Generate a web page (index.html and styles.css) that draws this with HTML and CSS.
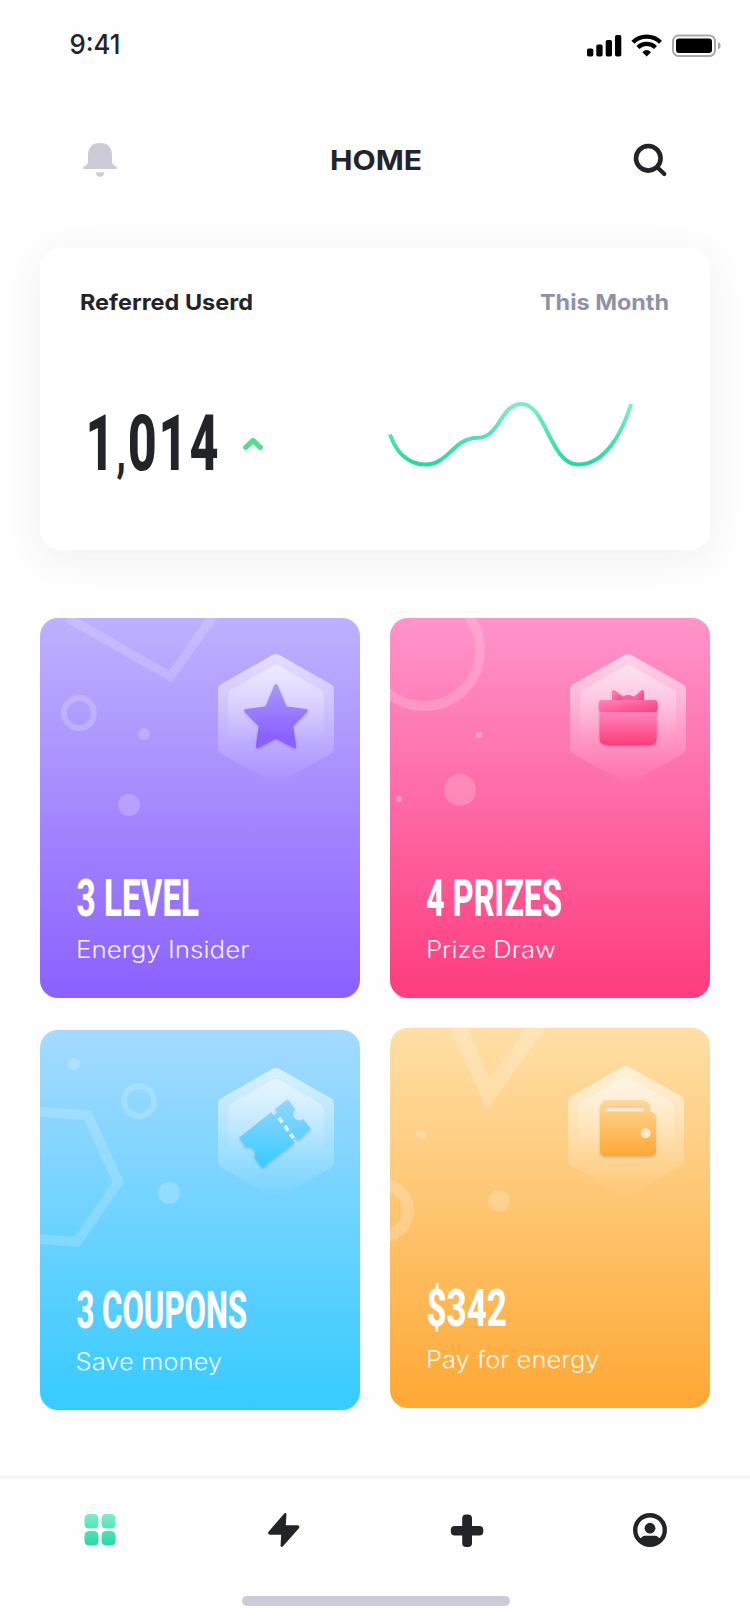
FILE: index.html
```html
<!DOCTYPE html>
<html lang="en">
<head>
<meta charset="utf-8">
<title>Home</title>
<link rel="stylesheet" href="styles.css">
</head>
<body>
<svg class="defs" width="0" height="0" aria-hidden="true">
  <defs>
    <linearGradient id="mint" x1="0" y1="0" x2="0" y2="1"><stop offset="0" stop-color="#7beecb"/><stop offset="1" stop-color="#27d8a3"/></linearGradient>
    <linearGradient id="glass" gradientUnits="userSpaceOnUse" x1="0" y1="-67" x2="0" y2="66"><stop offset="0" stop-color="#fff" stop-opacity=".64"/><stop offset="1" stop-color="#fff" stop-opacity="0"/></linearGradient>
    <linearGradient id="glass-in" gradientUnits="userSpaceOnUse" x1="0" y1="-55" x2="0" y2="22"><stop offset="0" stop-color="#fff" stop-opacity=".44"/><stop offset="1" stop-color="#fff" stop-opacity="0"/></linearGradient>
    <linearGradient id="violet" x1="0" y1="0" x2="0" y2="1"><stop offset="0" stop-color="#a797ff"/><stop offset=".85" stop-color="#8b60ff"/></linearGradient>
    <linearGradient id="rose" x1="0" y1="0" x2="0" y2="1"><stop offset="0" stop-color="#ff86bd"/><stop offset="1" stop-color="#fe3c7d"/></linearGradient>
    <linearGradient id="rose-lid" x1="0" y1="0" x2="1" y2="1"><stop offset="0" stop-color="#ff86bd"/><stop offset="1" stop-color="#fe3c7d"/></linearGradient>
    <linearGradient id="sky" x1="0" y1="0" x2="0" y2="1"><stop offset="0" stop-color="#93d6ff"/><stop offset="1" stop-color="#36cbff"/></linearGradient>
    <linearGradient id="amber" x1="0" y1="0" x2="0" y2="1"><stop offset="0" stop-color="#ffd898"/><stop offset="1" stop-color="#fea834"/></linearGradient>
    <filter id="lift" x="-20%" y="-20%" width="140%" height="150%"><feDropShadow dx="0" dy="1.5" stdDeviation="1" flood-color="#333" flood-opacity=".22"/></filter>
    <g id="badge">
      <path fill="url(#glass)" d="M-3.5-64.1Q0-66.100 3.500-64.100L54.500-34.900Q58-33 58-29V29Q58 33 54.500 34.900L3.500 64.100Q0 66.100-3.500 64.100L-54.500 34.900Q-58 33-58 29V-29Q-58-33-54.500-34.900Z"/>
      <path fill="url(#glass-in)" d="M-3.500-53.300Q0-55.300 3.500-53.300L44.500-29.600Q48-27.600 48-23.600V23.600Q48 27.600 44.500 29.600L3.500 53.300Q0 55.300-3.500 53.300L-44.500 29.600Q-48 27.600-48 23.600V-23.600Q-48-27.600-44.500-29.600Z"/>
    </g>
  </defs>
</svg>

<header class="status">
  <svg class="clock" width="60" height="34"><text class="label regular" x="-.5" y="22" font-size="27" textLength="51" lengthAdjust="spacingAndGlyphs">9:41</text></svg>
  <svg class="indicators" width="134" height="24" viewBox="587 34 134 24">
    <rect x="587" y="48.500" width="6.300" height="8" rx="1.800"/><rect x="596.300" y="44.500" width="6.300" height="12" rx="1.800"/><rect x="605.700" y="40" width="6.300" height="16.500" rx="1.800"/><rect x="615" y="35" width="6.300" height="21.500" rx="1.800"/>
    <g fill="none" stroke="#000" stroke-width="4.200"><path d="M632.900 42.300a19.800 19.800 0 0 1 27.600 0"/><path d="M637.900 47.500a12.600 12.600 0 0 1 17.600 0"/></g>
    <path d="M646.700 56.600l-4.300-4.400q4.300-4.200 8.600 0z"/>
    <rect x="673" y="35.500" width="42" height="20.500" rx="5.500" fill="none" stroke="#a8a8a8" stroke-width="2"/>
    <rect x="676" y="38.500" width="36" height="14.500" rx="3"/>
    <path fill="#a8a8a8" d="M718 42q2.700 1 2.700 3.700t-2.700 3.700z"/>
  </svg>
</header>

<nav class="topbar">
  <svg width="34" height="36" viewBox="83 142 34 36" fill="#cccbd7">
    <path d="M88 155.500Q88 143 100 143T112 155.500V161Q112 165 115.500 166.200Q117 166.800 117 168Q117 169 115.500 169H84.500Q83 169 83 168Q83 166.800 84.500 166.200Q88 165 88 161Z"/>
    <path d="M96 172.300h8.200q0 4.400-4.100 4.400t-4.100-4.400z"/>
  </svg>
  <svg width="110" height="40"><text class="label strong" x="10" y="30" font-size="27.300" textLength="92" lengthAdjust="spacingAndGlyphs">HOME</text></svg>
  <svg width="34" height="36" viewBox="633 142 34 36" fill="none" stroke="#232429"><circle cx="648.300" cy="158.300" r="12.300" stroke-width="4.600"/><path d="M657.500 167.500L664.300 174" stroke-width="4.200" stroke-linecap="round"/></svg>
</nav>

<section class="summary">
  <div class="summary-head">
    <svg width="180" height="30"><text class="label strong" x="0" y="22" font-size="22" textLength="173" lengthAdjust="spacingAndGlyphs">Referred Userd</text></svg>
    <svg width="136" height="30"><text class="label muted" x="6" y="22" font-size="22" textLength="129" lengthAdjust="spacingAndGlyphs">This Month</text></svg>
  </div>
  <div class="summary-body">
    <div class="figure">
      <svg width="146" height="90"><text class="display ink" x="1.500" y="66" font-size="78" letter-spacing="3" textLength="135" lengthAdjust="spacingAndGlyphs">1<tspan font-size="56">,</tspan>014</text></svg>
      <svg width="22" height="16" viewBox="242 436 22 16"><path d="M245.700 447.300L253 440.500L260.300 447.300" fill="none" stroke="#51de8d" stroke-width="5.200" stroke-linecap="round" stroke-linejoin="round"/></svg>
    </div>
    <svg width="248" height="68" viewBox="386 400 248 68"><path d="M390 434.300C396 452 408 464.600 425 464.600C449 464.600 453 437.700 478 437.700C500 437.700 500 404 521.700 404C546 404 550 464.600 578.300 464.600C604 464.600 621 436 631.200 404" fill="none" stroke="url(#mint)" stroke-width="4"/></svg>
  </div>
</section>

<main class="tiles">
  <article class="tile purple">
    <svg width="320" height="380">
      <g fill="#fff" fill-opacity=".2"><circle cx="104" cy="116" r="6"/><circle cx="89" cy="187" r="11"/></g>
      <g fill="none" stroke="#fff"><path d="M27-.5L130.500 58.500L181.500-13.600" stroke-width="9.200" stroke-opacity=".17"/><circle cx="39" cy="95" r="15" stroke-width="6" stroke-opacity=".2"/></g>
      <use href="#badge" x="236" y="101"/>
      <path filter="url(#lift)" fill="url(#violet)" stroke="url(#violet)" stroke-width="3.500" stroke-linejoin="round" d="M236 68L245.300 90L266 92.800L251.500 107.500L254.500 128.500L236 119L217.500 128.500L220.500 107.500L206 92.800L226.700 90Z"/>
      <text class="display" x="36.500" y="298" font-size="52" textLength="122.500" lengthAdjust="spacingAndGlyphs">3 LEVEL</text>
      <text class="label light" x="36" y="340" font-size="23.500" textLength="173.500" lengthAdjust="spacingAndGlyphs">Energy Insider</text>
    </svg>
  </article>
  <article class="tile pink">
    <svg width="320" height="380">
      <g fill="#fff"><circle cx="89" cy="117" r="3" fill-opacity=".35"/><circle cx="9" cy="181" r="3" fill-opacity=".35"/><circle cx="70" cy="172" r="16" fill-opacity=".2"/></g>
      <circle cx="34" cy="32" r="56" fill="none" stroke="#fff" stroke-opacity=".18" stroke-width="10"/>
      <use href="#badge" x="238" y="101"/>
      <g filter="url(#lift)">
        <path fill="url(#rose)" d="M209.500 93H266.700V120Q266.700 127 259.700 127H216.500Q209.500 127 209.500 120Z"/>
        <path fill="url(#rose-lid)" d="M222 83V74Q222 71.500 224.500 72.200L234 79.500V83Z"/>
        <path fill="url(#rose-lid)" d="M254 83V74Q254 71.500 251.500 72.200L243 79.500V83Z"/>
        <ellipse cx="238.300" cy="81" rx="6.500" ry="4" fill="#ff5f99"/>
        <rect x="208.700" y="82" width="59" height="12" rx="3.500" fill="url(#rose-lid)"/>
      </g>
      <text class="display" x="36" y="298" font-size="52" textLength="136" lengthAdjust="spacingAndGlyphs">4 PRIZES</text>
      <text class="label light" x="36" y="340" font-size="23.500" textLength="130" lengthAdjust="spacingAndGlyphs">Prize Draw</text>
    </svg>
  </article>
  <article class="tile blue">
    <svg width="320" height="380">
      <g fill="#fff" fill-opacity=".22"><circle cx="34" cy="34" r="6"/><circle cx="129" cy="163" r="11"/></g>
      <circle cx="99" cy="71" r="15" fill="none" stroke="#fff" stroke-opacity=".18" stroke-width="6"/>
      <path fill="#fff" fill-opacity=".17" d="M0 76.700L51 80.700L84 152.300L39.300 217.300L0 214V204L34.300 207L72.700 152.300L44.300 90L0 86.700Z"/>
      <use href="#badge" x="236" y="103"/>
      <g filter="url(#lift)"><path fill="url(#sky)" d="M199 107.700L231.300 82.300L233.600 85.500L237.300 82.600L235 79.300L247.700 69.300L255.300 79.200A6.300 6.300 0 0 0 263.300 89L271 99L258 110.500L255.600 107.200L252 109.500L254.700 112.700L222.300 138L214 126.700A6.300 6.300 0 0 0 206.300 117.500Z"/></g>
      <path d="M238 86.500L253.500 108" stroke="#dcf4ff" stroke-width="3.600" stroke-dasharray="6 4" stroke-dashoffset="-1.500"/>
      <text class="display" x="36.500" y="298" font-size="52" textLength="170.500" lengthAdjust="spacingAndGlyphs">3 COUPONS</text>
      <text class="label light" x="35.500" y="340" font-size="23.500" textLength="146.500" lengthAdjust="spacingAndGlyphs">Save money</text>
    </svg>
  </article>
  <article class="tile orange">
    <svg width="320" height="380">
      <g fill="#fff" fill-opacity=".2"><circle cx="31" cy="107" r="5"/><circle cx="109" cy="173" r="11"/><path d="M60 0L96.700 82.300L155.700 0H135.700L100 50.300L77.300 0Z"/></g>
      <circle cx="-8" cy="182.700" r="26" fill="none" stroke="#fff" stroke-opacity=".2" stroke-width="12"/>
      <use href="#badge" x="236" y="103"/>
      <g filter="url(#lift)"><path fill="url(#amber)" fill-rule="evenodd" d="M219 72H251Q260 72 260 81V83.700Q266 84.500 266 90V122Q266 128 260 128H216Q210 128 210 122V81Q210 72 219 72ZM217.500 78Q215.300 78 215.300 80.500V83.500H254.300V80.500Q254.300 78 252 78Z"/></g>
      <circle cx="255.700" cy="105.300" r="5" fill="#ffe9cb"/>
      <text class="display" x="36.500" y="298" font-size="52" textLength="80.500" lengthAdjust="spacingAndGlyphs">$342</text>
      <text class="label light" x="36" y="340" font-size="23.500" textLength="173.500" lengthAdjust="spacingAndGlyphs">Pay for energy</text>
    </svg>
  </article>
</main>

<footer class="tabs">
  <div class="tab-row">
    <svg width="36" height="36" viewBox="82 1512 36 36"><path fill="url(#mint)" d="M89.500 1514h4q5 0 5 5v4.500q0 5-5 5h-4q-5 0-5-5v-4.500q0-5 5-5zM106.500 1514h4q5 0 5 5v4.500q0 5-5 5h-4q-5 0-5-5v-4.500q0-5 5-5zM89.500 1531h4q5 0 5 5v4.500q0 5-5 5h-4q-5 0-5-5v-4.500q0-5 5-5zM106.500 1531h4q5 0 5 5v4.500q0 5-5 5h-4q-5 0-5-5v-4.500q0-5 5-5z"/></svg>
    <svg width="36" height="36" viewBox="265.500 1512 36 36" fill="#232429" stroke="#232429" stroke-width="2.500" stroke-linejoin="round"><path d="M285.700 1514.300L270 1532.500Q269.500 1533.500 270.800 1533.500H283L282.300 1545.700L298.500 1527.300Q298.800 1526.500 298 1526.500H285Z"/></svg>
    <svg width="36" height="36" viewBox="448.700 1512 36 36" fill="#232429"><rect x="461.900" y="1514.500" width="9.800" height="32.500" rx="4"/><rect x="450.500" y="1526" width="32.500" height="9.600" rx="4"/></svg>
    <svg width="36" height="36" viewBox="632 1512 36 36"><circle cx="650" cy="1530" r="14.800" fill="none" stroke="#232429" stroke-width="4.400"/><circle cx="650" cy="1528.200" r="5.400" fill="#232429"/><path fill="#232429" d="M638.500 1538.500Q641.500 1538 642 1537Q643 1535.800 645 1535.800H655Q657 1535.800 658 1537Q658.500 1538 661.500 1538.500Q657 1545 650 1545T638.500 1538.500Z"/></svg>
  </div>
  <div class="home-bar"></div>
</footer>
</body>
</html>
```
FILE: styles.css
```css
body {
  margin: 0;
  width: 750px;
  height: 1624px;
  overflow: hidden;
  background: #fefefe;
  display: flex;
  flex-direction: column;
  font-family: Inter, "Liberation Sans", sans-serif;
}

svg {
  display: block;
  flex: none;
  overflow: visible;
}

.defs {
  position: absolute;
}

.label {
  font-family: Inter, "Liberation Sans", sans-serif;
  font-weight: 700;
  fill: #232429;
}

.label.regular {
  font-weight: 450;
}

.label.muted {
  fill: #8f92a5;
}

.label.light {
  font-weight: 350;
  fill: #fff;
  fill-opacity: 0.92;
}

.display {
  font-family: Roboto, "Liberation Sans", sans-serif;
  font-weight: 800;
  fill: #fff;
}

.display.ink {
  fill: #232429;
}

.status {
  box-sizing: border-box;
  height: 88px;
  padding: 32px 29px 0 70px;
  display: flex;
  justify-content: space-between;
}

.indicators {
  margin-top: 2px;
}

.topbar {
  height: 144px;
  padding: 0 83px;
  display: flex;
  justify-content: space-between;
  align-items: center;
}

.summary {
  box-sizing: border-box;
  margin: 16px 40px 0;
  height: 302px;
  padding: 40px;
  border-radius: 20px;
  background: #fff;
  box-shadow: 0 8px 40px rgba(30, 30, 50, 0.06);
}

.summary-head,
.summary-body,
.figure {
  display: flex;
  justify-content: space-between;
}

.summary-body {
  margin-top: 82px;
  padding: 0 36px 0 4px;
}

.figure {
  gap: 12px;
  margin-top: 4px;
}

.figure svg + svg {
  margin-top: 32px;
}

.tiles {
  margin: 68px 40px 0;
  display: grid;
  grid-template-columns: 320px 320px;
  column-gap: 30px;
  row-gap: 30px;
}

.tile {
  height: 380px;
  border-radius: 18px;
  overflow: hidden;
}

.purple {
  background: linear-gradient(#beb1fe, #8b60ff);
}

.pink {
  background: linear-gradient(#ff94cb, #fe3c7d);
}

.blue {
  margin-top: 2px;
  background: linear-gradient(#a5daff, #36cbff);
}

.orange {
  background: linear-gradient(#ffdfa6, #fea834);
}

.tabs {
  margin-top: auto;
  height: 146px;
  border-top: 2px solid #f4f4f7;
}

.tab-row {
  padding: 34px 82px 0;
  display: flex;
  justify-content: space-between;
}

.home-bar {
  width: 268px;
  height: 10px;
  margin: 48px 0 0 242px;
  border-radius: 5px;
  background: #cccbd7;
}
```
